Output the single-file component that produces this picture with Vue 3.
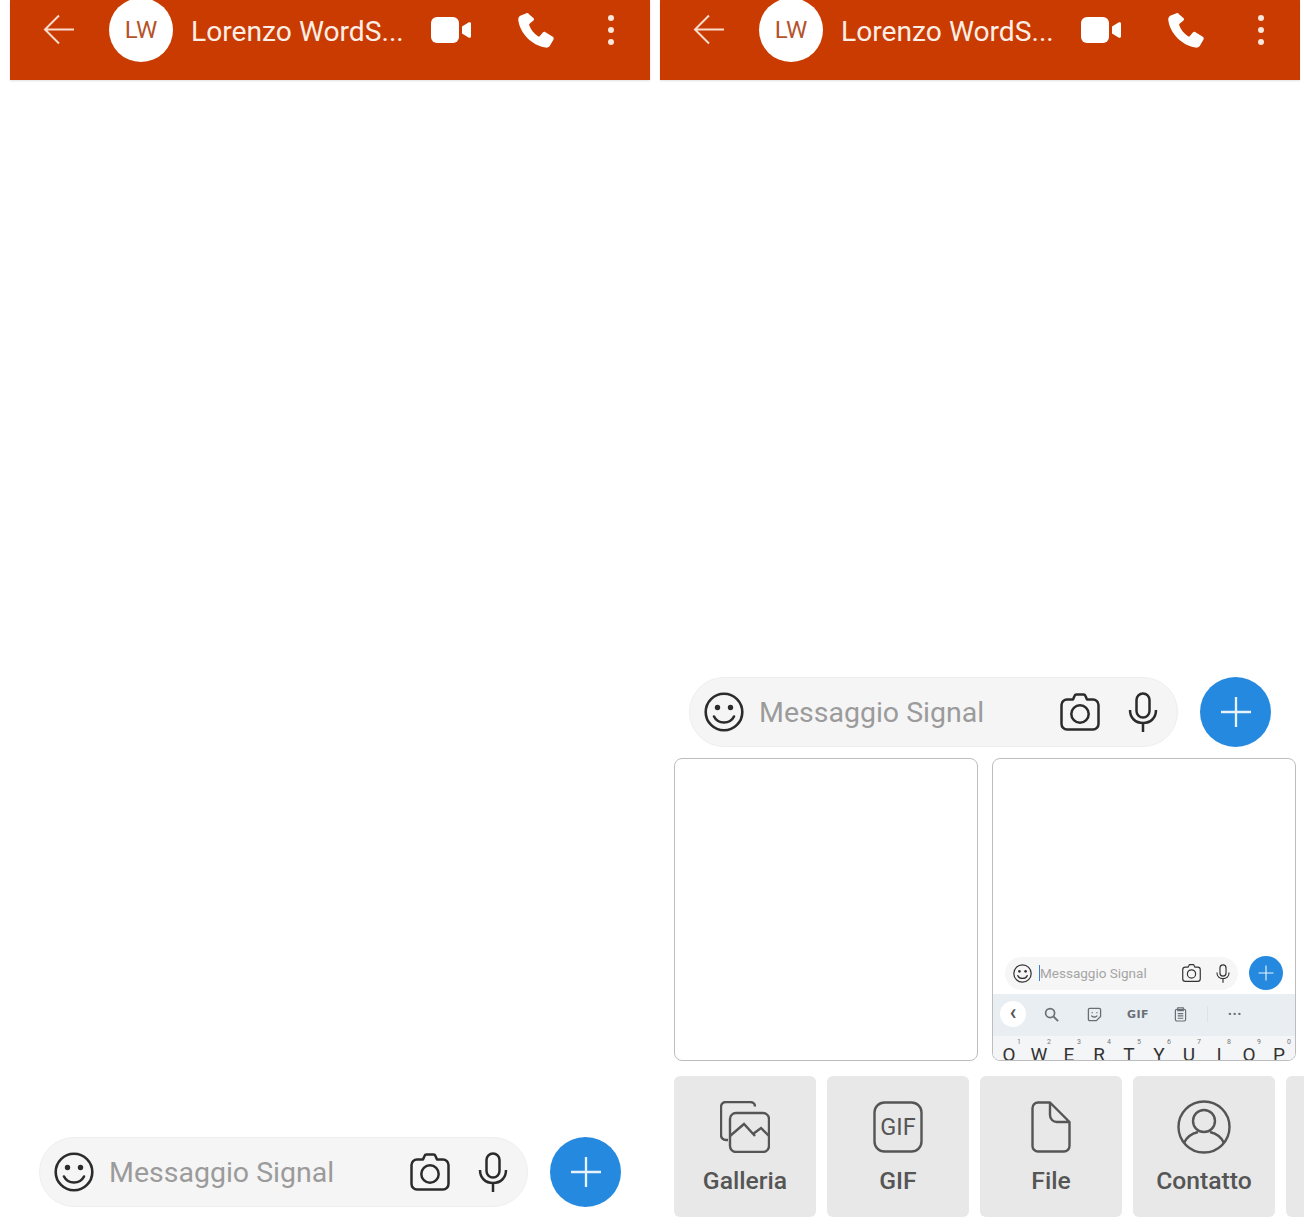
<script setup>
const tiles = [
  { label: 'Galleria', icon: 'i-gallery' },
  { label: 'GIF', icon: 'i-gif' },
  { label: 'File', icon: 'i-file' },
  { label: 'Contatto', icon: 'i-contact' },
  { label: '', icon: '' }
]
const keys = [['Q','1'],['W','2'],['E','3'],['R','4'],['T','5'],['Y','6'],['U','7'],['I','8'],['O','9'],['P','0']]
const phones = [{ open: false }, { open: true }]
</script>

<template>
  <div class="screen">
    <svg class="defs" aria-hidden="true">
      <symbol id="i-back" viewBox="0 0 32 32"><path d="M31 15.500H2M16 1.500 2 15.500l14 14" fill="none" stroke="currentColor" stroke-width="2"/></symbol>
      <symbol id="i-video" viewBox="0 0 40 28"><rect x="0" y="1" width="28" height="26" rx="6" fill="currentColor"/><path d="M31 10.500 37.500 6.500c1-.6 2.500 0 2.500 1V20.500c0 1-1.500 1.600-2.500 1L31 17.500z" fill="currentColor"/></symbol>
      <symbol id="i-phone" viewBox="0 0 36 36"><path d="M8.500 1.200 2.800 3.400C.8 4.300 0 6 .3 8.200 2.200 21.500 13.500 33 27.500 35.600c2 .3 3.800-.5 4.700-2.400l3.300-5.800c.5-1 .2-2-.7-2.600l-7.300-4.600c-1-.6-2-.4-2.700.4l-2.900 3.300c-.5.6-1.200.7-1.900.3-4-2.500-7.100-6.500-8.800-11-.2-.7 0-1.300.6-1.800l3.400-2.600c.8-.7 1-1.600.5-2.600L11 2.200c-.5-1-1.500-1.400-2.500-1z" fill="currentColor"/></symbol>
      <symbol id="i-smile" viewBox="0 0 40 40"><circle cx="20" cy="20" r="18.300" fill="none" stroke="currentColor" stroke-width="2.600"/><circle cx="13.500" cy="15.500" r="2.700" fill="currentColor"/><circle cx="26.500" cy="15.500" r="2.700" fill="currentColor"/><path d="M10 24.500c2 4 5.500 6 10 6s8-2 10-6" fill="none" stroke="currentColor" stroke-width="2.600" stroke-linecap="round"/></symbol>
      <symbol id="i-camera" viewBox="0 0 40 38"><path d="M13 6.500 14.500 3c.3-.8 1-1.500 2-1.500h7c1 0 1.700.7 2 1.500L27 6.500h6c3 0 5.500 2.500 5.500 5.500v19c0 3-2.500 5.500-5.500 5.500H7c-3 0-5.500-2.500-5.500-5.500V12c0-3 2.500-5.500 5.500-5.500z" fill="none" stroke="currentColor" stroke-width="2.500" stroke-linejoin="round"/><circle cx="20" cy="21" r="8.700" fill="none" stroke="currentColor" stroke-width="2.500"/></symbol>
      <symbol id="i-mic" viewBox="0 0 30 40"><rect x="8.500" y="1.500" width="13" height="24" rx="6.500" fill="none" stroke="currentColor" stroke-width="2.500"/><path d="M2 18c0 8 5.500 13 13 13s13-5 13-13M15 31v9" fill="none" stroke="currentColor" stroke-width="2.500"/></symbol>
      <symbol id="i-plus" viewBox="0 0 32 32"><path d="M16 1v30M1 16h30" fill="none" stroke="currentColor" stroke-width="2.300"/></symbol>
      <symbol id="i-gallery" viewBox="0 0 50 52"><path d="M8 39H6c-2.800 0-5-2-5-5V6c0-3 2.200-5 5-5h24c2.800 0 5 1.800 5 4.500" fill="none" stroke="currentColor" stroke-width="2.400"/><rect x="10" y="12" width="39" height="39" rx="6" fill="none" stroke="currentColor" stroke-width="2.400"/><path d="M10 35 24 23 35 35M33 33 41 27 49 35" fill="none" stroke="currentColor" stroke-width="2.400"/></symbol>
      <symbol id="i-gif" viewBox="0 0 50 52"><rect x="1.500" y="1.500" width="47" height="49" rx="10" fill="none" stroke="currentColor" stroke-width="2.400"/></symbol>
      <symbol id="i-file" viewBox="0 0 40 52"><path d="M19 1.500H7c-3 0-5.500 2.500-5.500 5.500v38c0 3 2.500 5.500 5.500 5.500h26c3 0 5.500-2.500 5.500-5.500V21zM19 1.500V14c0 4 3 7 7 7h12.500" fill="none" stroke="currentColor" stroke-width="2.400" stroke-linejoin="round"/></symbol>
      <symbol id="i-contact" viewBox="0 0 54 54"><circle cx="27" cy="27" r="25.500" fill="none" stroke="currentColor" stroke-width="2.400"/><circle cx="27" cy="21" r="11" fill="none" stroke="currentColor" stroke-width="2.400"/><path d="M7 43c3-7 10-10 14-11M47 43c-3-7-10-10-14-11" fill="none" stroke="currentColor" stroke-width="2.400"/></symbol>
      <symbol id="i-search" viewBox="0 0 16 16"><circle cx="6.500" cy="6.500" r="4.800" fill="none" stroke="currentColor" stroke-width="1.800"/><path d="m10 10 5 5" stroke="currentColor" stroke-width="2"/></symbol>
      <symbol id="i-sticker" viewBox="0 0 16 16"><path d="M3 1.500h10c1 0 1.500.6 1.500 1.500v7l-4.500 4.500H3c-1 0-1.500-.6-1.500-1.500V3c0-.9.5-1.500 1.500-1.500z" fill="none" stroke="currentColor" stroke-width="1.400"/><path d="M5 9.500c1.500 1.300 4 1.300 5.500 0M5.500 6h.1M10.500 6h.1" fill="none" stroke="currentColor" stroke-width="1.400" stroke-linecap="round"/></symbol>
      <symbol id="i-clip" viewBox="0 0 14 16"><rect x="1.500" y="2.500" width="11" height="12.500" rx="1.500" fill="none" stroke="currentColor" stroke-width="1.300"/><path d="M4 .8h6v3H4zM4 7h6M4 9.500h6M4 12h6" fill="none" stroke="currentColor" stroke-width="1.200"/></symbol>
    </svg>

    <section v-for="(phone, i) in phones" :key="i" class="phone">
      <header class="topbar">
        <svg class="back"><use href="#i-back"/></svg>
        <div class="avatar">LW</div>
        <div class="name">Lorenzo WordS...</div>
        <svg class="video"><use href="#i-video"/></svg>
        <svg class="call"><use href="#i-phone"/></svg>
        <div class="dots"><span></span><span></span><span></span></div>
      </header>

      <div class="thread"></div>

      <div class="composer" :class="{ 'composer-open': phone.open }">
        <div class="pill">
          <svg class="smile"><use href="#i-smile"/></svg>
          <span class="placeholder">Messaggio Signal</span>
          <svg class="camera"><use href="#i-camera"/></svg>
          <svg class="mic"><use href="#i-mic"/></svg>
        </div>
        <button class="fab"><svg class="plus"><use href="#i-plus"/></svg></button>
      </div>

      <div v-if="phone.open" class="tray">
        <div class="previews">
          <div class="frame"></div>
          <div class="frame frame-shot">
            <div class="mini-composer">
              <div class="mini-pill">
                <svg class="mini-smile"><use href="#i-smile"/></svg>
                <span class="mini-text">Messaggio Signal</span>
                <svg class="mini-camera"><use href="#i-camera"/></svg>
                <svg class="mini-mic"><use href="#i-mic"/></svg>
              </div>
              <div class="mini-fab"><svg class="mini-plus"><use href="#i-plus"/></svg></div>
            </div>
            <div class="kb-tools">
              <div class="kb-back">‹</div>
              <svg class="kb-search"><use href="#i-search"/></svg>
              <svg class="kb-sticker"><use href="#i-sticker"/></svg>
              <span class="kb-gif">GIF</span>
              <svg class="kb-clip"><use href="#i-clip"/></svg>
              <span class="kb-sep"></span>
              <span class="kb-more">•••</span>
            </div>
            <div class="kb-keys">
              <div v-for="k in keys" :key="k[0]" class="key">
                <sup>{{ k[1] }}</sup><span>{{ k[0] }}</span>
              </div>
            </div>
          </div>
        </div>
        <div class="tiles">
          <div v-for="(t, n) in tiles" :key="n" class="tile">
            <div v-if="t.icon" class="tile-icon">
              <svg :class="t.icon"><use :href="'#' + t.icon"/></svg>
              <span v-if="t.icon === 'i-gif'" class="gif-text">GIF</span>
            </div>
            <div v-if="t.label" class="tile-label">{{ t.label }}</div>
          </div>
        </div>
      </div>
    </section>
  </div>
</template>

<style>
html, body { margin: 0; background: #fff; overflow: hidden; }
</style>

<style scoped>
.screen {
  width: 1304px;
  height: 1228px;
  overflow: hidden;
  display: flex;
  gap: 10px;
  padding-left: 10px;
  box-sizing: border-box;
  background: #fff;
  font-family: Roboto, "Liberation Sans", sans-serif;
}
.defs { position: absolute; width: 0; height: 0; }
.phone { width: 640px; flex: none; display: flex; flex-direction: column; }
svg { display: block; flex: none; }

.topbar {
  height: 80px;
  box-sizing: border-box;
  background: #c93b00;
  color: #fff;
  display: flex;
  align-items: center;
  padding: 0 0 20px 33px;
  box-shadow: 0 1px 2px rgba(0, 0, 0, .12);
}
.back { width: 32px; height: 32px; color: #fbdccd; }
.avatar {
  width: 64px;
  height: 64px;
  margin: 0 0 0 34px;
  border-radius: 50%;
  background: #fff;
  color: #b5532c;
  font-size: 24px;
  display: flex;
  align-items: center;
  justify-content: center;
}
.name { width: 240px; margin-left: 18px; padding-top: 2px; font-size: 28.200px; font-weight: 400; color: #fdeee6; white-space: nowrap; }
.video { width: 40px; height: 28px; }
.call { width: 36px; height: 36px; margin-left: 47px; }
.dots { margin-left: 54px; display: flex; flex-direction: column; gap: 6px; }
.dots span { width: 6px; height: 6px; border-radius: 50%; background: #fbe6da; }

.thread { flex: 1; }

.composer { display: flex; align-items: center; padding: 0 0 21px 29px; }
.composer-open { padding-bottom: 0; }
.pill {
  width: 489px;
  height: 70px;
  box-sizing: border-box;
  background: #f5f5f5;
  border: 1px solid #eee;
  border-radius: 35px;
  display: flex;
  align-items: center;
  padding-left: 14px;
  color: #2b2b2b;
}
.smile { width: 40px; height: 40px; }
.placeholder { width: 301px; margin-left: 15px; font-size: 28.500px; color: #9b9b9b; white-space: nowrap; }
.camera { width: 40px; height: 38px; }
.mic { width: 30px; height: 40px; margin-left: 28px; }
.fab {
  width: 71px;
  height: 70px;
  margin-left: 22px;
  padding: 0;
  border: 0;
  border-radius: 50%;
  background: #2589e0;
  color: #e8f3fc;
  display: flex;
  align-items: center;
  justify-content: center;
}
.plus { width: 32px; height: 32px; }

.tray { padding: 11px 0 11px 14px; }
.previews { display: flex; gap: 14px; }
.frame {
  width: 304px;
  height: 303px;
  box-sizing: border-box;
  border: 1.500px solid #bdbdbd;
  border-radius: 8px;
  background: #fff;
  overflow: hidden;
}
.frame-shot { display: flex; flex-direction: column; justify-content: flex-end; }

.mini-composer { display: flex; align-items: center; padding: 0 0 4px 12px; }
.mini-pill {
  width: 233px;
  height: 33px;
  box-sizing: border-box;
  border-radius: 17px;
  background: #f6f6f6;
  display: flex;
  align-items: center;
  padding-left: 8px;
  color: #333;
}
.mini-smile { width: 19px; height: 19px; }
.mini-text {
  width: 142px;
  margin-left: 7px;
  padding-left: 0;
  border-left: 1px solid #3a7fd0;
  font-size: 13.500px;
  line-height: 16px;
  color: #a5a5a5;
  white-space: nowrap;
}
.mini-camera { width: 19px; height: 18px; }
.mini-mic { width: 14px; height: 19px; margin-left: 15px; }
.mini-fab {
  width: 34px;
  height: 34px;
  margin-left: 11px;
  border-radius: 50%;
  background: #2589e0;
  color: #e8f3fc;
  display: flex;
  align-items: center;
  justify-content: center;
}
.mini-plus { width: 16px; height: 16px; }

.kb-tools {
  height: 42px;
  box-sizing: border-box;
  padding-bottom: 2px;
  flex: none;
  background: #e9eef3;
  display: flex;
  align-items: center;
  padding-left: 7px;
  color: #6a6f75;
}
.kb-back {
  width: 26px;
  height: 26px;
  border-radius: 50%;
  background: #fff;
  text-align: center;
  font-size: 22px;
  line-height: 22px;
  color: #555;
  font-weight: 700;
}
.kb-search { width: 15px; height: 15px; margin-left: 18px; }
.kb-sticker { width: 15px; height: 15px; margin-left: 28px; }
.kb-gif { width: 22px; margin-left: 25px; font-size: 11px; font-weight: 700; letter-spacing: .5px; font-family: "DejaVu Sans", sans-serif; }
.kb-clip { width: 13px; height: 15px; margin-left: 25px; }
.kb-sep { width: 1px; height: 16px; margin-left: 20px; background: #dde2e7; }
.kb-more { margin-left: 20px; font-size: 11px; letter-spacing: 1px; }
.kb-keys {
  height: 24px;
  flex: none;
  background: #f3f5f7;
  display: flex;
  overflow: hidden;
  padding-left: 1px;
}
.key {
  width: 30px;
  flex: none;
  height: 24px;
  position: relative;
  overflow: hidden;
  color: #333;
  text-align: center;
}
.key span { display: block; padding-top: 8px; font-size: 19px; line-height: 22px; }
.key sup { position: absolute; right: 3px; top: 2px; font-size: 7px; line-height: 8px; color: #777; }

.tiles { display: flex; gap: 11px; margin-top: 15px; width: 700px; }
.tile {
  width: 142px;
  height: 141px;
  flex: none;
  box-sizing: border-box;
  padding-top: 24px;
  background: #e8e8e8;
  border-radius: 6px;
  color: #555;
  display: flex;
  flex-direction: column;
  align-items: center;
}
.tile-icon {
  height: 54px;
  position: relative;
  display: flex;
  align-items: center;
  justify-content: center;
}
.i-gallery, .i-gif { width: 50px; height: 52px; }
.i-file { width: 40px; height: 52px; }
.i-contact { width: 54px; height: 54px; }
.gif-text {
  position: absolute;
  inset: 0;
  display: flex;
  align-items: center;
  justify-content: center;
  font-size: 23.500px;
}
.tile-label { margin-top: 11px; font-size: 24.700px; line-height: 32px; font-weight: 500; }
</style>
